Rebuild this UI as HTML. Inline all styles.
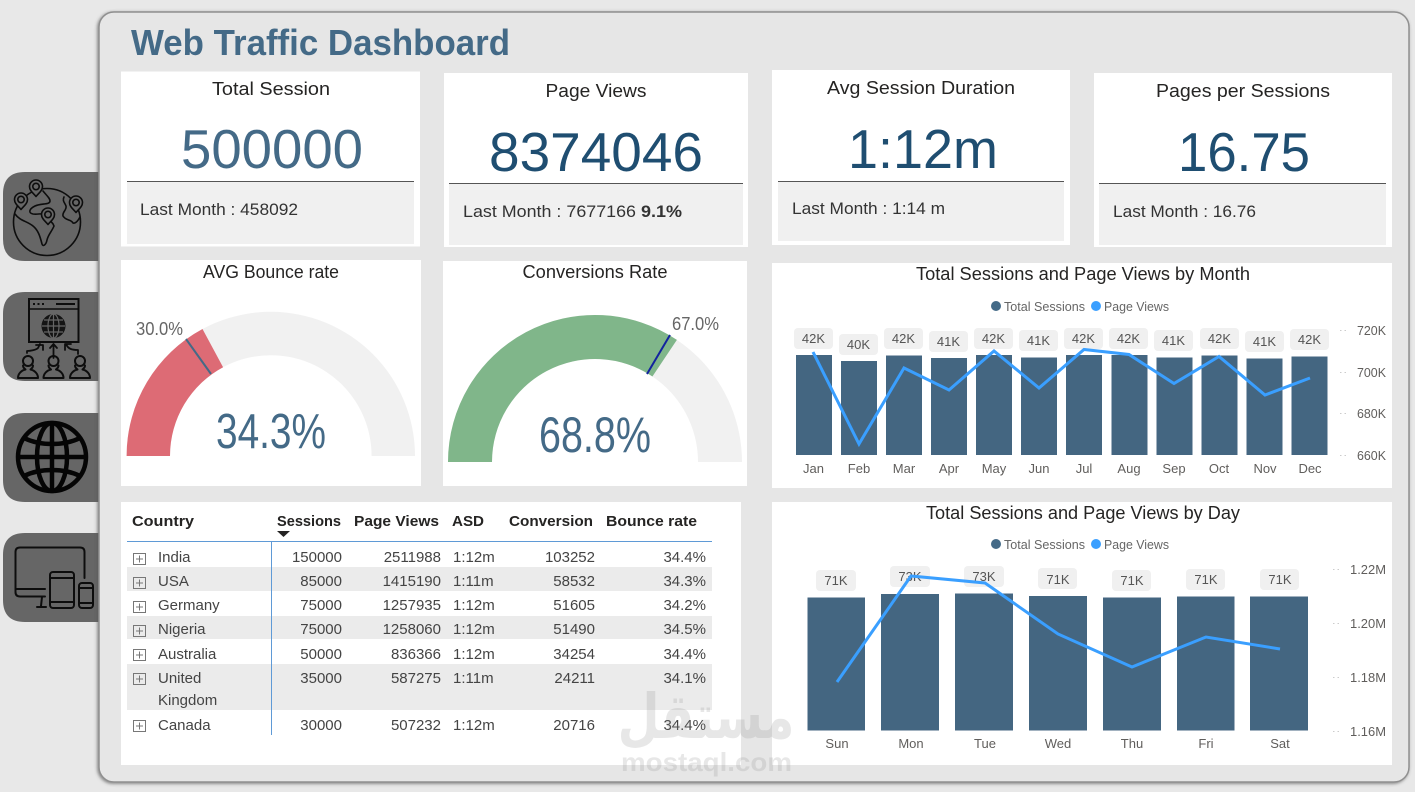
<!DOCTYPE html>
<html lang="en"><head><meta charset="utf-8"><title>Web Traffic Dashboard</title>
<style>
html,body{margin:0;padding:0;background:#e8e8e8;width:1415px;height:792px;overflow:hidden}
svg{display:block;font-family:"Liberation Sans","DejaVu Sans",sans-serif}
text{white-space:pre}
.t{font-size:18px;fill:#252423;text-anchor:middle}
.lm{font-size:17px;fill:#333}
.pill{fill:#f0f0f0}
.pt{font-size:13px;fill:#555;text-anchor:middle}
.ax{font-size:13px;fill:#605e5c;text-anchor:middle}
.yx{font-size:13px;fill:#605e5c}
.leg{font-size:13px;fill:#666}
.th{font-size:15px;font-weight:bold;fill:#252423}
.c{font-size:15px;fill:#444}
.r{font-size:15px;fill:#444;text-anchor:end}
.bar{fill:#446681}
.ln{fill:none;stroke:#3a9fff;stroke-width:3}
.i{fill:none;stroke:#0d0d0d;stroke-width:1.6;stroke-linejoin:round;stroke-linecap:round}
.box{fill:none;stroke:#777;stroke-width:1}
</style></head><body>
<svg width="1415" height="792" viewBox="0 0 1415 792" xmlns="http://www.w3.org/2000/svg">
<defs>
<filter id="s" x="-2%" y="-2%" width="104%" height="104%"><feDropShadow dx="-1" dy="1" stdDeviation="1.500" flood-color="#555" flood-opacity=".7"/></filter>
<g id="pin"><path class="i" style="fill:#666" d="M0 8.500C-3 5-6.500 2.500-6.500-1.500a6.500 6.500 0 0 1 13 0C6.500 2.500 3 5 0 8.500Z"/><circle class="i" cx="0" cy="-1.500" r="3.200"/></g>
<g id="user"><circle class="i" style="stroke-width:2" cx="0" cy="-13" r="5"/><path class="i" style="stroke-width:2" d="M-5-8.500C-5-6-3-5-2.500-4.500C-7-3.500-10 0-10 4H10C10 0 7-3.500 2.500-4.500C3-5 5-6 5-8.500"/></g>
</defs>
<rect width="1415" height="792" fill="#e8e8e8"/>

<!-- side tabs -->
<path d="M99 172H25Q3 172 3 194V239Q3 261 25 261H99Z" fill="#666"/>
<path d="M99 292H25Q3 292 3 314V359Q3 381 25 381H99Z" fill="#666"/>
<path d="M99 413H25Q3 413 3 435V480Q3 502 25 502H99Z" fill="#666"/>
<path d="M99 533H25Q3 533 3 555V600Q3 622 25 622H99Z" fill="#666"/>

<!-- icon 1 -->
<circle class="i" cx="47" cy="222" r="33.500"/>
<path class="i" d="M43 191C47 196 50 198 50 201C50 205 41 203 35 206C29 209 28 213 33 214C39 215 41 212 44 216C46 220 52 220 54 226C52 231 48 235 47 240C46 245 43 247 42 244C40 236 38 230 33 226C27 221 20 221 15 214"/>
<path class="i" d="M64 197C62 201 65 203 66 206C67 210 62 212 63 216C66 221 71 219 73 223C76 224 79 219 80 217"/>
<use href="#pin" x="36" y="188"/><use href="#pin" x="21" y="201"/><use href="#pin" x="48" y="216"/><use href="#pin" x="76" y="204"/>

<!-- icon 2 -->
<rect x="29" y="299" width="49.500" height="43" fill="none" stroke="#0d0d0d" stroke-width="2"/>
<path d="M29 309H79" stroke="#0d0d0d" stroke-width="1.500"/>
<path d="M33 304H35M37.500 304H39.500M42 304H44M56 304H75" stroke="#0d0d0d" stroke-width="2"/>
<circle cx="53.500" cy="326" r="12" fill="#141414"/>
<path d="M42 326H65M44 320H63M44 332H63M53.500 314V338" stroke="#666" stroke-width="1.200" fill="none"/>
<ellipse cx="53.500" cy="326" rx="5.500" ry="12" fill="none" stroke="#666" stroke-width="1.200"/>
<path class="i" d="M27 353V351C30 351 36 350 38 348L40 344M36 345H43V350M53.500 344V358M50 348L53.500 344L57 348M66 344C68 349 72 350 78 350V354M65 350V344H71" style="stroke-width:1.800"/>
<use href="#user" x="28" y="374"/><use href="#user" x="53.500" y="374"/><use href="#user" x="80" y="374"/>

<!-- icon 3 -->
<g fill="none" stroke="#050505" stroke-width="4.500">
<circle cx="52" cy="457" r="34"/>
<ellipse cx="52" cy="457" rx="15" ry="34"/>
<path d="M52 423V491M18 457H86M24 438C40 446 64 446 80 438M24 476C40 468 64 468 80 476"/>
</g>

<!-- icon 4 -->
<g fill="none" stroke="#0d0d0d" stroke-width="2" stroke-linecap="round" stroke-linejoin="round">
<path d="M84.500 578V552Q84.500 547.500 80 547.500H20Q15.500 547.500 15.500 552V592Q15.500 596.500 20 596.500H45"/>
<path d="M16 589H45M42 597L41 606M37 607H46"/>
<rect x="50" y="572" width="24" height="36" rx="3"/><path d="M50 578H74M50 602H74"/>
<rect x="79" y="583" width="14" height="25" rx="3"/><path d="M79 588H93M79 603H93"/>
</g>

<!-- main panel -->
<rect x="99" y="12" width="1310" height="770" rx="15" fill="#e6e6e6" stroke="#8f8f8f" stroke-width="1.500" filter="url(#s)"/>
<text x="131" y="55" font-size="36" font-weight="bold" fill="#446a87" textLength="379" lengthAdjust="spacingAndGlyphs">Web Traffic Dashboard</text>

<!-- KPI cards -->
<rect x="121" y="71.500" width="299" height="175" fill="#fff"/>
<rect x="127" y="182" width="287" height="62" fill="#f0f0f0"/>
<path d="M127 181.500H414" stroke="#555" stroke-width="1"/>
<text class="t" x="271" y="95" textLength="118" lengthAdjust="spacingAndGlyphs">Total Session</text>
<text x="181" y="168" font-size="55" fill="#446a87" textLength="182" lengthAdjust="spacingAndGlyphs">500000</text>
<text class="lm" x="140" y="215" textLength="158" lengthAdjust="spacingAndGlyphs">Last Month : 458092</text>

<rect x="444" y="73" width="304" height="174" fill="#fff"/>
<rect x="449" y="184" width="294" height="61" fill="#f0f0f0"/>
<path d="M449 183.500H743" stroke="#555" stroke-width="1"/>
<text class="t" x="596" y="97" textLength="101" lengthAdjust="spacingAndGlyphs">Page Views</text>
<text x="489" y="171" font-size="55" fill="#1f4e71" textLength="214" lengthAdjust="spacingAndGlyphs">8374046</text>
<text class="lm" x="463" y="217" textLength="173" lengthAdjust="spacingAndGlyphs">Last Month : 7677166</text>
<text class="lm" x="641" y="217" font-weight="bold" fill="#222" textLength="41" lengthAdjust="spacingAndGlyphs">9.1%</text>

<rect x="772" y="70" width="298" height="175" fill="#fff"/>
<rect x="778" y="182" width="286" height="59" fill="#f0f0f0"/>
<path d="M778 181.500H1064" stroke="#555" stroke-width="1"/>
<text class="t" x="921" y="94" textLength="188" lengthAdjust="spacingAndGlyphs">Avg Session Duration</text>
<text x="848" y="168" font-size="55" fill="#1f4e71" textLength="150" lengthAdjust="spacingAndGlyphs">1:12m</text>
<text class="lm" x="792" y="214" textLength="153" lengthAdjust="spacingAndGlyphs">Last Month : 1:14 m</text>

<rect x="1094" y="73" width="298" height="174" fill="#fff"/>
<rect x="1099" y="184" width="287" height="61" fill="#f0f0f0"/>
<path d="M1099 183.500H1386" stroke="#555" stroke-width="1"/>
<text class="t" x="1243" y="97" textLength="174" lengthAdjust="spacingAndGlyphs">Pages per Sessions</text>
<text x="1178" y="171" font-size="55" fill="#1f4e71" textLength="132" lengthAdjust="spacingAndGlyphs">16.75</text>
<text class="lm" x="1113" y="217" textLength="143" lengthAdjust="spacingAndGlyphs">Last Month : 16.76</text>

<!-- gauges -->
<rect x="121" y="260" width="300" height="226" fill="#fff"/>
<path d="M126.600 456A144.200 144.200 0 0 1 415 456H371.600A100.800 100.800 0 0 0 170 456Z" fill="#f1f1f1"/>
<path d="M126.600 456A144.200 144.200 0 0 1 202.500 329L223.100 367.200A100.800 100.800 0 0 0 170 456Z" fill="#dd6b75"/>
<path d="M186 339L211 374" stroke="#446a87" stroke-width="2"/>
<text class="t" x="271" y="278" textLength="136" lengthAdjust="spacingAndGlyphs">AVG Bounce rate</text>
<text x="136" y="335" font-size="18" fill="#666" textLength="47" lengthAdjust="spacingAndGlyphs">30.0%</text>
<text x="216" y="448" font-size="49" fill="#446a87" textLength="110" lengthAdjust="spacingAndGlyphs">34.3%</text>

<rect x="443" y="261" width="304" height="225" fill="#fff"/>
<path d="M448 462A147 147 0 0 1 742 462H698A103 103 0 0 0 492 462Z" fill="#f1f1f1"/>
<path d="M448 462A147 147 0 0 1 676.900 339.900L652.400 376.500A103 103 0 0 0 492 462Z" fill="#80b68a"/>
<path d="M670 335L647 374" stroke="#12239e" stroke-width="2"/>
<text class="t" x="595" y="278" textLength="145" lengthAdjust="spacingAndGlyphs">Conversions Rate</text>
<text x="672" y="330" font-size="18" fill="#666" textLength="47" lengthAdjust="spacingAndGlyphs">67.0%</text>
<text x="539" y="452" font-size="50" fill="#446a87" textLength="112" lengthAdjust="spacingAndGlyphs">68.8%</text>

<!-- month chart -->
<rect x="772" y="263" width="620" height="225" fill="#fff"/>
<text class="t" x="1083" y="280" textLength="334" lengthAdjust="spacingAndGlyphs">Total Sessions and Page Views by Month</text>
<circle cx="996" cy="306" r="5" fill="#446a87"/>
<text class="leg" x="1004" y="311" textLength="81" lengthAdjust="spacingAndGlyphs">Total Sessions</text>
<circle cx="1096" cy="306" r="5" fill="#3a9fff"/>
<text class="leg" x="1104" y="311" textLength="65" lengthAdjust="spacingAndGlyphs">Page Views</text>
<rect class="bar" x="796" y="355" width="36" height="100"/>
<rect class="bar" x="841" y="361" width="36" height="94"/>
<rect class="bar" x="886" y="355.500" width="36" height="99.500"/>
<rect class="bar" x="931" y="358" width="36" height="97"/>
<rect class="bar" x="976" y="355" width="36" height="100"/>
<rect class="bar" x="1021" y="357.500" width="36" height="97.500"/>
<rect class="bar" x="1066" y="355" width="36" height="100"/>
<rect class="bar" x="1111.500" y="355" width="36" height="100"/>
<rect class="bar" x="1156.500" y="357.500" width="36" height="97.500"/>
<rect class="bar" x="1201.500" y="355.500" width="36" height="99.500"/>
<rect class="bar" x="1246.500" y="358.500" width="36" height="96.500"/>
<rect class="bar" x="1291.500" y="356.500" width="36" height="98.500"/>
<g class="pill">
<rect x="794" y="328" width="39" height="21" rx="4"/><rect x="839" y="334" width="39" height="21" rx="4"/><rect x="884" y="328" width="39" height="21" rx="4"/><rect x="929" y="331" width="39" height="21" rx="4"/><rect x="974" y="328" width="39" height="21" rx="4"/><rect x="1019" y="330" width="39" height="21" rx="4"/><rect x="1064" y="328" width="39" height="21" rx="4"/><rect x="1109" y="328" width="39" height="21" rx="4"/><rect x="1154" y="330" width="39" height="21" rx="4"/><rect x="1200" y="328" width="39" height="21" rx="4"/><rect x="1245" y="331" width="39" height="21" rx="4"/><rect x="1290" y="329" width="39" height="21" rx="4"/>
</g>
<text class="pt" x="813.500" y="343">42K</text><text class="pt" x="858.500" y="349">40K</text><text class="pt" x="903.500" y="343">42K</text><text class="pt" x="948.500" y="346">41K</text><text class="pt" x="993.500" y="343">42K</text><text class="pt" x="1038.500" y="345">41K</text><text class="pt" x="1083.500" y="343">42K</text><text class="pt" x="1128.500" y="343">42K</text><text class="pt" x="1173.500" y="345">41K</text><text class="pt" x="1219.500" y="343">42K</text><text class="pt" x="1264.500" y="346">41K</text><text class="pt" x="1309.500" y="344">42K</text>
<polyline class="ln" points="813,352 859,444 904,368 949,390 994,351 1039,388 1084,349.500 1129,354.500 1174,383.500 1219,356.500 1265,395 1310,378"/>
<text class="ax" x="813.500" y="473">Jan</text><text class="ax" x="859" y="473">Feb</text><text class="ax" x="904" y="473">Mar</text><text class="ax" x="949" y="473">Apr</text><text class="ax" x="994" y="473">May</text><text class="ax" x="1039" y="473">Jun</text><text class="ax" x="1084" y="473">Jul</text><text class="ax" x="1129" y="473">Aug</text><text class="ax" x="1174" y="473">Sep</text><text class="ax" x="1219" y="473">Oct</text><text class="ax" x="1265" y="473">Nov</text><text class="ax" x="1310" y="473">Dec</text>
<text class="yx" x="1357" y="335" textLength="29" lengthAdjust="spacingAndGlyphs">720K</text><text class="yx" x="1357" y="377" textLength="29" lengthAdjust="spacingAndGlyphs">700K</text><text class="yx" x="1357" y="418" textLength="29" lengthAdjust="spacingAndGlyphs">680K</text><text class="yx" x="1357" y="460" textLength="29" lengthAdjust="spacingAndGlyphs">660K</text>
<path d="M1340 330.500H1347M1340 372.500H1347M1340 413.500H1347M1340 455.500H1347" stroke="#ccc" stroke-width="1" stroke-dasharray="1.500 3"/>

<!-- day chart -->
<rect x="772" y="502" width="620" height="263" fill="#fff"/>
<text class="t" x="1083" y="519" textLength="314" lengthAdjust="spacingAndGlyphs">Total Sessions and Page Views by Day</text>
<circle cx="996" cy="544" r="5" fill="#446a87"/>
<text class="leg" x="1004" y="549" textLength="81" lengthAdjust="spacingAndGlyphs">Total Sessions</text>
<circle cx="1096" cy="544" r="5" fill="#3a9fff"/>
<text class="leg" x="1104" y="549" textLength="65" lengthAdjust="spacingAndGlyphs">Page Views</text>
<rect class="bar" x="807.500" y="597.500" width="57.500" height="133"/>
<rect class="bar" x="881" y="594" width="58" height="136.500"/>
<rect class="bar" x="955" y="593.500" width="58" height="137"/>
<rect class="bar" x="1029" y="596" width="58" height="134.500"/>
<rect class="bar" x="1103" y="597.500" width="58" height="133"/>
<rect class="bar" x="1177" y="596.500" width="57.500" height="134"/>
<rect class="bar" x="1250" y="596.500" width="58" height="134"/>
<g class="pill">
<rect x="816" y="570" width="40" height="21" rx="4"/><rect x="890" y="566" width="40" height="21" rx="4"/><rect x="964" y="566" width="40" height="21" rx="4"/><rect x="1038" y="568" width="39" height="21" rx="4"/><rect x="1112" y="570" width="39" height="21" rx="4"/><rect x="1186" y="569" width="39" height="21" rx="4"/><rect x="1260" y="569" width="39" height="21" rx="4"/>
</g>
<text class="pt" x="836" y="585">71K</text><text class="pt" x="910" y="581">73K</text><text class="pt" x="984" y="581">73K</text><text class="pt" x="1058" y="584">71K</text><text class="pt" x="1132" y="585">71K</text><text class="pt" x="1206" y="584">71K</text><text class="pt" x="1280" y="584">71K</text>
<polyline class="ln" points="837,682 911,576 985,583 1058,634 1132,667 1206,637 1280,649"/>
<text class="ax" x="837" y="748">Sun</text><text class="ax" x="911" y="748">Mon</text><text class="ax" x="985" y="748">Tue</text><text class="ax" x="1058" y="748">Wed</text><text class="ax" x="1132" y="748">Thu</text><text class="ax" x="1206" y="748">Fri</text><text class="ax" x="1280" y="748">Sat</text>
<text class="yx" x="1350" y="574" textLength="36" lengthAdjust="spacingAndGlyphs">1.22M</text><text class="yx" x="1350" y="628" textLength="36" lengthAdjust="spacingAndGlyphs">1.20M</text><text class="yx" x="1350" y="682" textLength="36" lengthAdjust="spacingAndGlyphs">1.18M</text><text class="yx" x="1350" y="736" textLength="36" lengthAdjust="spacingAndGlyphs">1.16M</text>
<path d="M1333 569.500H1342M1333 623.500H1342M1333 677.500H1342M1333 731.500H1342" stroke="#ccc" stroke-width="1" stroke-dasharray="1.500 3"/>

<!-- table -->
<rect x="121" y="502" width="620" height="263" fill="#fff"/>
<rect x="127" y="567" width="585" height="24" fill="#ebebeb"/>
<rect x="127" y="616" width="585" height="23" fill="#ebebeb"/>
<rect x="127" y="664" width="585" height="46" fill="#ebebeb"/>
<path d="M127 541.500H712" stroke="#5f9ad6" stroke-width="1"/>
<path d="M271.500 541V735" stroke="#5f9ad6" stroke-width="1"/>
<text class="th" x="132" y="526" textLength="62" lengthAdjust="spacingAndGlyphs">Country</text>
<text class="th" x="277" y="526" textLength="64" lengthAdjust="spacingAndGlyphs">Sessions</text>
<path d="M277 531H290L283.500 537Z" fill="#252423"/>
<text class="th" x="354" y="526" textLength="85" lengthAdjust="spacingAndGlyphs">Page Views</text>
<text class="th" x="452" y="526" textLength="32" lengthAdjust="spacingAndGlyphs">ASD</text>
<text class="th" x="509" y="526" textLength="84" lengthAdjust="spacingAndGlyphs">Conversion</text>
<text class="th" x="606" y="526" textLength="91" lengthAdjust="spacingAndGlyphs">Bounce rate</text>

<g class="box">
<rect x="133.500" y="553.500" width="12" height="11"/><path d="M136 559H143M139.500 555.500V562.500"/>
<rect x="133.500" y="577.500" width="12" height="11"/><path d="M136 583H143M139.500 579.500V586.500"/>
<rect x="133.500" y="601.500" width="12" height="11"/><path d="M136 607H143M139.500 603.500V610.500"/>
<rect x="133.500" y="625.500" width="12" height="11"/><path d="M136 631H143M139.500 627.500V634.500"/>
<rect x="133.500" y="649.500" width="12" height="11"/><path d="M136 655H143M139.500 651.500V658.500"/>
<rect x="133.500" y="673.500" width="12" height="11"/><path d="M136 679H143M139.500 675.500V682.500"/>
<rect x="133.500" y="720.500" width="12" height="11"/><path d="M136 726H143M139.500 722.500V729.500"/>
</g>

<text class="c" x="158" y="562">India</text><text class="r" x="342" y="562">150000</text><text class="r" x="441" y="562">2511988</text><text class="c" x="453" y="562">1:12m</text><text class="r" x="595" y="562">103252</text><text class="r" x="706" y="562">34.4%</text>
<text class="c" x="158" y="586">USA</text><text class="r" x="342" y="586">85000</text><text class="r" x="441" y="586">1415190</text><text class="c" x="453" y="586">1:11m</text><text class="r" x="595" y="586">58532</text><text class="r" x="706" y="586">34.3%</text>
<text class="c" x="158" y="610">Germany</text><text class="r" x="342" y="610">75000</text><text class="r" x="441" y="610">1257935</text><text class="c" x="453" y="610">1:12m</text><text class="r" x="595" y="610">51605</text><text class="r" x="706" y="610">34.2%</text>
<text class="c" x="158" y="634">Nigeria</text><text class="r" x="342" y="634">75000</text><text class="r" x="441" y="634">1258060</text><text class="c" x="453" y="634">1:12m</text><text class="r" x="595" y="634">51490</text><text class="r" x="706" y="634">34.5%</text>
<text class="c" x="158" y="659">Australia</text><text class="r" x="342" y="659">50000</text><text class="r" x="441" y="659">836366</text><text class="c" x="453" y="659">1:12m</text><text class="r" x="595" y="659">34254</text><text class="r" x="706" y="659">34.4%</text>
<text class="c" x="158" y="683">United</text><text class="c" x="158" y="705">Kingdom</text><text class="r" x="342" y="683">35000</text><text class="r" x="441" y="683">587275</text><text class="c" x="453" y="683">1:11m</text><text class="r" x="595" y="683">24211</text><text class="r" x="706" y="683">34.1%</text>
<text class="c" x="158" y="730">Canada</text><text class="r" x="342" y="730">30000</text><text class="r" x="441" y="730">507232</text><text class="c" x="453" y="730">1:12m</text><text class="r" x="595" y="730">20716</text><text class="r" x="706" y="730">34.4%</text>

<!-- watermark -->
<g fill="#8c8c8c" opacity=".2">
<text transform="translate(706 738) scale(.78 1)" x="0" y="0" text-anchor="middle" font-size="62" font-weight="bold" font-family="'DejaVu Sans',sans-serif">مستقل</text>
<text x="621" y="771" font-size="26" font-weight="bold" textLength="171" lengthAdjust="spacingAndGlyphs">mostaql.com</text>
</g>
</svg>
</body></html>
